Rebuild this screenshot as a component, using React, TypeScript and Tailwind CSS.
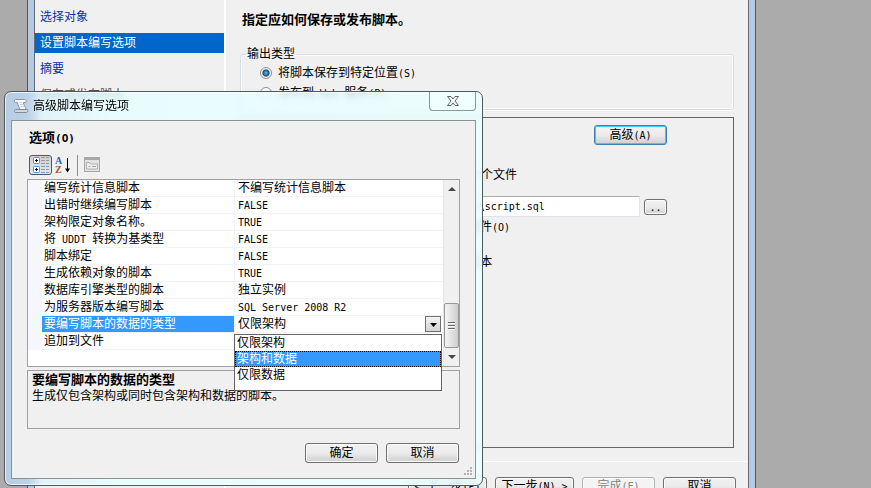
import { useState } from "react";
import type { ButtonHTMLAttributes } from "react";
import { clsx } from "clsx";
import { twMerge } from "tailwind-merge";

type Option = { name: string; value: string };

const STEPS = ["选择对象", "设置脚本编写选项", "摘要", "保存或发布脚本"];

const OPTIONS: Option[] = [
  { name: "编写统计信息脚本", value: "不编写统计信息脚本" },
  { name: "出错时继续编写脚本", value: "FALSE" },
  { name: "架构限定对象名称。", value: "TRUE" },
  { name: "将 UDDT 转换为基类型", value: "FALSE" },
  { name: "脚本绑定", value: "FALSE" },
  { name: "生成依赖对象的脚本", value: "TRUE" },
  { name: "数据库引擎类型的脚本", value: "独立实例" },
  { name: "为服务器版本编写脚本", value: "SQL Server 2008 R2" },
  { name: "要编写脚本的数据的类型", value: "仅限架构" },
  { name: "追加到文件", value: "" },
];

const DATA_TYPES = ["仅限架构", "架构和数据", "仅限数据"];

// Latin runs are set in a half-width face next to the full-width Chinese glyphs
function Text({ children }: { children: string }) {
  return (
    <>
      {children.split(/([\x20-\x7e]+)/).map((part, i) =>
        i % 2 ? (
          <span key={i} className="whitespace-pre font-['DejaVu_Sans_Mono',monospace] text-[10px] leading-none">
            {part}
          </span>
        ) : (
          part
        )
      )}
    </>
  );
}

function PushButton({ className, children, ...props }: ButtonHTMLAttributes<HTMLButtonElement> & { children: string }) {
  return (
    <button
      type="button"
      className={twMerge(
        "flex shrink-0 items-center justify-center whitespace-nowrap rounded-[3px] border shadow-[inset_0_0_0_1px_#fbfbfb]",
        props.disabled
          ? "border-[#adb2b5] bg-[#f4f4f4] text-[#838383]"
          : "border-[#707070] bg-linear-to-b from-[#f2f2f2] from-0% via-[#ebebeb] via-50% to-[#cfcfcf]",
        className
      )}
      {...props}
    >
      <span>
        <Text>{children}</Text>
      </span>
    </button>
  );
}

function RadioRow({ label, checked }: { label: string; checked?: boolean }) {
  return (
    <label className="flex h-5 items-center gap-1.5">
      <input
        type="radio"
        name="output"
        defaultChecked={checked}
        className="size-3 appearance-none rounded-full border border-[#8e8f8f] bg-[#f4f4f4] shadow-[inset_0_0_0_1px_#fff] checked:bg-[radial-gradient(circle,#5cc0ee_0,#16568a_3px,#b4bcc4_4px,#f4f4f4_5px)]"
      />
      <span>
        <Text>{label}</Text>
      </span>
    </label>
  );
}

function Wizard() {
  return (
    <div className="ml-[27px] mr-[115px] flex h-full border-x border-[#50565e] bg-[#b6c9e0] px-1.5">
      <div className="flex min-w-0 flex-1 border-x border-[#606a76] bg-[#f0f0f0]">
        <nav className="w-[189px] shrink-0 pt-[7px]">
          <ul className="space-y-1.5">
            {STEPS.map((step, i) => (
              <li key={step}>
                <a
                  href="#"
                  className={clsx(
                    "flex h-5 items-center pl-[5px]",
                    i === 1 ? "bg-[#0066cc] text-white" : i === 3 ? "text-[#505050]" : "text-[#0033aa]"
                  )}
                >
                  {step}
                </a>
              </li>
            ))}
          </ul>
        </nav>

        <div className="flex min-w-0 flex-1 flex-col border-l-2 border-white">
          <div className="flex h-[462px] shrink-0 flex-col border-b border-white pl-3.5 pr-3.5">
            <h1 className="mt-2.5 h-5 pl-0.5 text-[13px] font-bold leading-5">指定应如何保存或发布脚本。</h1>

            <fieldset className="mt-4 h-[64px] shrink-0 rounded-[3px] border border-[#d5dfe5] px-[19px] shadow-[inset_0_0_0_1px_#fff,0_1px_0_#fff]">
              <legend className="-ml-3.5 h-4 px-px leading-4">输出类型</legend>
              <div className="pt-px">
                <RadioRow label="将脚本保存到特定位置(S)" checked />
                <RadioRow label="发布到 Web 服务(P)" />
              </div>
            </fieldset>

            <section className="mt-[7px] h-[331px] shrink-0 border border-[#646464] pl-11 pr-[66px] pt-[7px]">
              <div className="flex justify-end">
                <PushButton className="h-5 w-[73px] border-[#3c7fb1] shadow-[inset_0_0_0_1px_#42c8f4]">高级(A)</PushButton>
              </div>
              <p className="mt-[22px] pl-[184px] leading-4">一个文件</p>
              <div className="mt-3 flex items-center gap-1 pt-px">
                <input
                  type="text"
                  aria-label="文件名"
                  defaultValue="C:\Users\Administrator\Documents\script.sql"
                  className="h-[21px] min-w-0 flex-1 rounded-[1px] border border-[#e2e3ea] border-t-[#abadb3] bg-white font-['DejaVu_Sans_Mono',monospace] text-[10px]"
                />
                <PushButton className="h-4 w-[23px]">..</PushButton>
              </div>
              <label className="mt-0.5 flex h-4 items-center gap-1.5 pl-[117px]">
                <input type="checkbox" className="size-3" />
                <span>
                  <Text>覆盖现有文件(O)</Text>
                </span>
              </label>
              <p className="mt-[19px] pl-[135px] leading-4">
                <Text>Unicode 文本</Text>
              </p>
            </section>
          </div>

          <div className="flex justify-end gap-2 pr-3 pt-[15px]">
            <PushButton className="h-[18px] w-[79px]">{"< 上一步(P)"}</PushButton>
            <PushButton className="h-[18px] w-[79px]">{"下一步(N) >"}</PushButton>
            <PushButton className="h-[18px] w-[73px]" disabled>
              完成(F)
            </PushButton>
            <PushButton className="h-[18px] w-[73px]">取消</PushButton>
          </div>
        </div>
      </div>
    </div>
  );
}

function ScriptIcon() {
  return (
    <svg viewBox="0 0 16 16" className="size-4">
      <path d="M2.500 1.500h9c2 0 2.500 3 .5 3h-1.500c0 2.500 2 4.500 2.500 7H7C6.500 9 4.500 7 4.500 4.500h-2c-1.600 0-1.600-3 0-3z" fill="#f8fafb" stroke="#8a98a4" />
      <path d="M2.500 11.500h11.500c1.500 0 1 3-.5 3H3c-2 0-2-3-.5-3z" fill="#cfd8df" stroke="#7f8d99" />
      <path d="M6 4.500h3.500M6.500 6.500h4M7.500 8.500h4" stroke="#c8d2da" />
    </svg>
  );
}

function CategorizedIcon() {
  return (
    <svg viewBox="0 0 18 18" className="size-[18px]">
      {[1.5, 10.5].map((y) => (
        <g key={y}>
          <rect x="1.500" y={y} width="6" height="6" rx="1" fill="#fff" stroke="#4a8ede" />
          <path d={`M3 ${y + 3}h3M4.500 ${y + 1.5}v3`} stroke="#000" />
        </g>
      ))}
      <path
        d="M9 1.500h4M14 1.500h3M9 4.500h4M14 4.500h3M9 7.500h4M14 7.500h3M9 10.500h4M14 10.500h3M9 13.500h4M14 13.500h3M9 16.500h4M14 16.500h3"
        stroke="#8e97a2"
      />
    </svg>
  );
}

function SortIcon() {
  return (
    <svg viewBox="0 0 16 18" className="h-[18px] w-4 font-['Liberation_Serif',serif] text-[10px] font-bold">
      <text x="0" y="8" fill="#2667b5">A</text>
      <text x="0" y="17" fill="#a8502a">Z</text>
      <path d="M12.500 2v13" stroke="#000" />
      <path d="M10 12.500h5l-2.500 4z" fill="#000" />
    </svg>
  );
}

function PagesIcon() {
  return (
    <svg viewBox="0 0 16 16" className="size-4">
      <rect x=".5" y=".5" width="15" height="14" fill="#e2e2e2" stroke="#a8a8a8" />
      <path d="M1 2h14" stroke="#a8a8a8" strokeWidth="2" />
      <path d="M2.500 5.500h3l1 1.500h7v5h-11z" fill="#f0f0f0" stroke="#b0b0b0" />
      <path d="M4.500 9.500h2M8 9.500h4" stroke="#a0a0a0" />
    </svg>
  );
}

function ScrollArrow({ down }: { down?: boolean }) {
  return (
    <svg viewBox="0 0 8 5" className="h-[5px] w-2">
      <path d={down ? "M0 0h8L4 4z" : "M0 5h8L4 1z"} fill="#484848" />
    </svg>
  );
}

function PropertyGrid() {
  const [dataType, setDataType] = useState("仅限架构");
  const [active, setActive] = useState("架构和数据");

  return (
    <div className="relative flex h-[188px] border border-[#a0a0a0] bg-white">
      <div className="min-w-0 flex-1">
        <table className="w-full table-fixed border-separate border-spacing-0">
          <tbody>
            {OPTIONS.map((option, i) => (
              <tr key={option.name} className="h-[17px]">
                <td className="w-3.5 bg-[#f5f7fd] p-0" />
                <th
                  scope="row"
                  className={clsx(
                    "w-[193px] whitespace-nowrap border-b border-r border-[#f2f2fa] p-0 pl-0.5 text-left font-normal leading-4",
                    i === 8 && "bg-[#3399ff] text-white"
                  )}
                >
                  <Text>{option.name}</Text>
                </th>
                <td className="whitespace-nowrap border-b border-[#f2f2fa] p-0 pl-[3px] leading-4">
                  {i === 8 ? (
                    <div className="relative flex h-4">
                      <select
                        aria-label={option.name}
                        value={dataType}
                        onChange={(e) => setDataType(e.target.value)}
                        className="h-4 w-full appearance-none bg-white leading-4 outline-none"
                      >
                        {DATA_TYPES.map((type) => (
                          <option key={type}>{type}</option>
                        ))}
                      </select>
                      <span className="pointer-events-none absolute right-0.5 top-0 flex size-4 items-center justify-center border border-[#707070] bg-linear-to-b from-[#f4f4f4] to-[#d4d4d4] pt-0.5">
                        <svg viewBox="0 0 7 4" className="h-1 w-[7px]">
                          <path d="M0 0h7L3.500 4z" fill="#000" />
                        </svg>
                      </span>
                    </div>
                  ) : (
                    <Text>{option.value}</Text>
                  )}
                </td>
              </tr>
            ))}
          </tbody>
        </table>
      </div>

      <div className="flex w-4 shrink-0 flex-col items-center border-l border-[#e6e6e6] bg-[#f0f0f0]">
        <button type="button" aria-label="向上滚动" className="flex h-4 w-full items-center justify-center">
          <ScrollArrow />
        </button>
        <div className="mt-auto flex h-[45px] w-full flex-col items-center justify-center gap-px rounded-[2px] border border-[#979797] bg-linear-to-r from-[#f5f5f5] to-[#cecece]">
          <span className="h-0.5 w-[7px] border-b border-white bg-[#686868]" />
          <span className="h-0.5 w-[7px] border-b border-white bg-[#686868]" />
          <span className="h-0.5 w-[7px] border-b border-white bg-[#686868]" />
        </div>
        <button type="button" aria-label="向下滚动" className="flex h-[18px] w-full items-center justify-center">
          <ScrollArrow down />
        </button>
      </div>

      <ul
        role="listbox"
        aria-label="要编写脚本的数据的类型"
        className="absolute left-[206px] right-[17px] top-[154px] z-10 h-[57px] border border-[#646464] bg-white"
      >
        {DATA_TYPES.map((type) => (
          <li
            key={type}
            role="option"
            aria-selected={type === active}
            onMouseEnter={() => setActive(type)}
            className={clsx(
              "h-4 pl-0.5 leading-4",
              type === active && "bg-[#3399ff] text-white outline-1 -outline-offset-1 outline-dotted outline-black"
            )}
          >
            {type}
          </li>
        ))}
      </ul>
    </div>
  );
}

function OptionsDialog() {
  return (
    <div
      role="dialog"
      aria-labelledby="dialog-title"
      className="absolute left-1 top-[91px] w-[479px] rounded-[7px] border border-[#50585f] bg-[linear-gradient(90deg,#b7cce3_0,#bcd2e8_22px,#dcf1f9d0_36px,#e6fdffd0_110px,#eaffffd0_100%)] px-1.5 pb-1.5 shadow-[inset_0_0_0_1px_#ffffffb0] backdrop-blur-[3px]"
    >
      <header className="flex h-7 items-start">
        <div className="flex h-7 items-center gap-1 pl-0.5">
          <ScriptIcon />
          <h2 id="dialog-title">高级脚本编写选项</h2>
        </div>
        <button
          type="button"
          aria-label="关闭"
          className="ml-auto flex h-[19px] w-[47px] items-center justify-center rounded-b-[4px] border border-t-0 border-[#8a979c] bg-[#f0ffff]"
        >
          <svg viewBox="0 0 12 10" className="h-2.5 w-3">
            <path
              d="M.5.5h3.500L6 3 8 .5h3.500L8 5l3.500 4.500H8L6 7 4 9.500H.5L4 5z"
              fill="#fff"
              stroke="#5c6468"
            />
          </svg>
        </button>
      </header>

      <div className="relative border border-[#8a9296] bg-[#f0f0f0] px-[15px] pb-[15px] pt-2">
        <h3 className="pl-0.5 text-[13px] font-bold leading-[18px]">
          选项<span className="font-['DejaVu_Sans_Mono',monospace] text-[11px] leading-none">(O)</span>
        </h3>

        <div className="mt-[7px] flex h-[22px] items-center pl-0.5">
          <button
            type="button"
            aria-label="按分类顺序"
            aria-pressed="true"
            className="flex h-5 w-[23px] items-center justify-center rounded-[3px] border border-[#4c5868] bg-linear-to-b from-[#cdd2d8] to-[#e4e7ea]"
          >
            <CategorizedIcon />
          </button>
          <button type="button" aria-label="字母顺序" className="ml-[3px]">
            <SortIcon />
          </button>
          <span className="ml-1.5 h-[21px] w-px bg-[#8c8c8c]" />
          <button type="button" aria-label="属性页" disabled className="ml-1.5">
            <PagesIcon />
          </button>
        </div>

        <div className="mt-[3px]">
          <PropertyGrid />
        </div>

        <div className="mt-[3px] h-[59px] border border-[#a0a0a0] px-1 pt-px">
          <p className="text-[13px] font-bold leading-4">要编写脚本的数据的类型</p>
          <p className="leading-4">生成仅包含架构或同时包含架构和数据的脚本。</p>
        </div>

        <div className="mt-[14px] flex justify-end gap-2 pr-px">
          <PushButton className="h-5 w-[73px]">确定</PushButton>
          <PushButton className="h-5 w-[73px]">取消</PushButton>
        </div>

        <svg viewBox="0 0 9 9" className="absolute bottom-0.5 right-0.5 size-[9px]" fill="#b4b4b4">
          <path d="M6 0h2v2H6zM3 3h2v2H3zM6 3h2v2H6zM0 6h2v2H0zM3 6h2v2H3zM6 6h2v2H6z" />
        </svg>
      </div>
    </div>
  );
}

export default function App() {
  return (
    <main className="relative h-screen overflow-hidden bg-[#ababab] font-['Liberation_Sans','Noto_Sans_CJK_SC',sans-serif] text-[12px] leading-4 text-black">
      <Wizard />
      <OptionsDialog />
    </main>
  );
}
